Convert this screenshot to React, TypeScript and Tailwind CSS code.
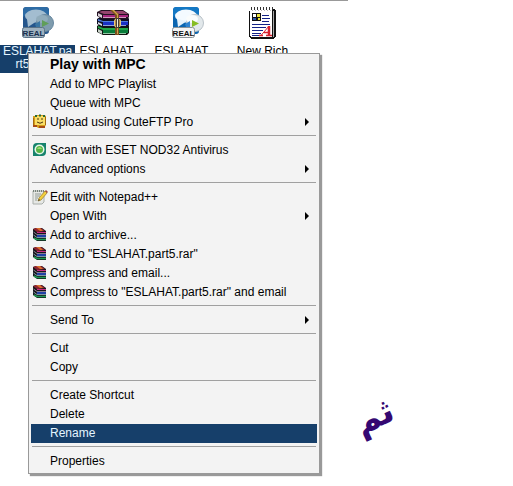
import React from 'react';

type IconName = 'cute' | 'eset' | 'notepad' | 'rar';

interface MenuEntry {
  label: string;
  icon?: IconName;
  submenu?: boolean;
  bold?: boolean;
  selected?: boolean;
}

const menuGroups: MenuEntry[][] = [
  [
    { label: 'Play with MPC', bold: true },
    { label: 'Add to MPC Playlist' },
    { label: 'Queue with MPC' },
    { label: 'Upload using CuteFTP Pro', icon: 'cute', submenu: true },
  ],
  [
    { label: 'Scan with ESET NOD32 Antivirus', icon: 'eset' },
    { label: 'Advanced options', submenu: true },
  ],
  [
    { label: 'Edit with Notepad++', icon: 'notepad' },
    { label: 'Open With', submenu: true },
    { label: 'Add to archive...', icon: 'rar' },
    { label: 'Add to "ESLAHAT.part5.rar"', icon: 'rar' },
    { label: 'Compress and email...', icon: 'rar' },
    { label: 'Compress to "ESLAHAT.part5.rar" and email', icon: 'rar' },
  ],
  [{ label: 'Send To', submenu: true }],
  [{ label: 'Cut' }, { label: 'Copy' }],
  [{ label: 'Create Shortcut' }, { label: 'Delete' }, { label: 'Rename', selected: true }],
  [{ label: 'Properties' }],
];

const RealIcon = ({ dimmed = false }: { dimmed?: boolean }) => (
  <svg width="32" height="32" viewBox="0 0 32 32" aria-hidden="true">
    <rect x="1" y="0" width="26" height="27" rx="3" fill={dimmed ? '#25568c' : '#0b65b0'} />
    <path d="M1 4Q1 0 5 0H23Q27 0 27 4V8Q14 0 1 10Z" fill={dimmed ? '#2e6ca5' : '#1478c4'} />
    <ellipse cx="14" cy="9" rx="11" ry="6.500" fill={dimmed ? '#a3bdd0' : '#f4faff'} />
    <path d="M5 12L6 20L15 14Z" fill={dimmed ? '#a3bdd0' : '#e5f2fc'} />
    <circle cx="23" cy="16" r="8.500" fill={dimmed ? '#7f9cae' : '#e2e8eb'} stroke={dimmed ? '#6888a0' : '#b9c2c8'} />
    <ellipse cx="20" cy="12" rx="6" ry="4" fill={dimmed ? '#91acbb' : '#fafcfc'} />
    <path d="M20 13L27 16.500L20 20Z" fill={dimmed ? '#609e59' : '#87bd22'} />
    <path d="M13 17L18 14V20H14Z" fill={dimmed ? '#3975a3' : '#2f83d0'} />
    <rect x="0.500" y="20.500" width="22" height="10" rx="2" fill={dimmed ? '#9eb1bf' : '#f4f4f4'} stroke={dimmed ? '#5b7387' : '#8c9499'} />
    <text x="11.500" y="28.500" textAnchor="middle" fontSize="8" fontWeight="bold" fontFamily="Liberation Sans, sans-serif" fill={dimmed ? '#172e4e' : '#111'}>
      REAL
    </text>
  </svg>
);

const ArchiveIcon = () => (
  <svg width="32" height="32" viewBox="0 0 32 32" aria-hidden="true">
    {/* bottom book */}
    <path d="M0 19L3 17H31L32 19V26L30 28H6L0 25Z" fill="#101510" />
    <path d="M1 19L6 21H31V23H6L1 21Z" fill="#1fa548" />
    <path d="M6 23H31V26H6Z" fill="#087c3a" />
    <path d="M1 22L5 24V27L1 25Z" fill="#c9d2ca" />
    <path d="M6 26.500H29" stroke="#8fc4a0" />
    {/* middle book */}
    <path d="M0 12L3 10H31L32 12V18L30 20H6L0 17Z" fill="#0e0f22" />
    <path d="M1 12L6 14H31V15H6L1 14Z" fill="#4d7be0" />
    <path d="M6 15H31V18H6Z" fill="#1930c4" />
    <path d="M1 15L5 17V19L1 17Z" fill="#d5dce9" />
    <path d="M6 18.500H29" stroke="#8fa2d8" />
    {/* top book */}
    <path d="M0 5L4 3H26L32 7V10L30 12H6L0 9Z" fill="#241222" />
    <path d="M2 5L5 4H26L31 7H7Z" fill="#95456f" />
    <path d="M6 8H31V10H6Z" fill="#a5267e" />
    <path d="M1 6L5 8V11L1 9Z" fill="#d9d0d8" />
    <path d="M6 10.500H29" stroke="#cf9cc0" />
    {/* belt */}
    <path d="M13 3H17L22 7V28H18V8Z" fill="#7b501e" />
    <path d="M15 3H17L21 7V27H20V8Z" fill="#d0a24a" />
    <rect x="17.500" y="12.500" width="6" height="7" rx="1" fill="#b28a44" stroke="#e9cd7c" />
    <path d="M20.500 11V21" stroke="#453d39" strokeWidth="3" />
    <path d="M20.500 12V20" stroke="#f3f0d8" />
  </svg>
);

const RichTextIcon = () => (
  <svg width="32" height="32" viewBox="0 0 32 32" shapeRendering="crispEdges" aria-hidden="true">
    <path d="M4 2H27L29 4V29L27 32H5L2 30V4Z" fill="#111" />
    <path d="M4 2H25V30H4L3 29V4Z" fill="#fff" />
    <path d="M26 4H27V30H26Z" fill="#aaa" />
    <path d="M4 1.500H27" stroke="#333" strokeWidth="3" strokeDasharray="1 2" />
    <path d="M5 3.500H26" stroke="#bbb" strokeDasharray="1 2" />
    <rect x="5" y="6" width="9" height="8" fill="#111" />
    <path d="M6 7H9V10H6Z" fill="#fff" />
    <path d="M10 7H13V10H10Z" fill="#eee43a" />
    <path d="M6 11H9V13H6Z" fill="#2b55aa" />
    <path d="M11 11H13V13H11Z" fill="#eee43a" />
    <path d="M15 8.500H22M15 11.500H23M15 14.500H22M5 17.500H23M5 20.500H19M5 23.500H16M5 26.500H14M5 28.500H12" stroke="#142388" />
    <g fill="none" stroke="#d8222e" shapeRendering="auto">
      <path d="M14 28.500L22 19" />
      <path d="M22 19V28" strokeWidth="2.500" />
      <path d="M17 25.500H22M12 28.500H16M19 28.500H25" strokeWidth="1.500" />
    </g>
  </svg>
);

const MenuIcon = ({ name }: { name: IconName }) => {
  if (name === 'cute') {
    return (
      <svg width="16" height="16" viewBox="0 0 16 16" aria-hidden="true">
        <path d="M1 2H4L5 1H12L14 2V11L12 14H6L4 12H1Z" fill="#d59b16" />
        <path d="M3 2H13V11H3Z" fill="#f9dd65" />
        <path d="M3 2H5M7 1.500H9M11 2H13" stroke="#286a35" strokeWidth="2" />
        <path d="M6 4V6M10 4V6M5 8Q8 10.500 11 8" fill="none" stroke="#493413" />
        <path d="M1 12H5M7 13H13" stroke="#a74b16" strokeWidth="2" />
        <path d="M1.500 4V11M13.500 3V11" stroke="#a46a0d" />
      </svg>
    );
  }
  if (name === 'eset') {
    return (
      <svg width="16" height="16" viewBox="0 0 16 16" aria-hidden="true">
        <path d="M5 1H14V10Q14 14 10 14H1V5Q1 1 5 1Z" fill="#16836d" />
        <circle cx="7.500" cy="7.500" r="5" fill="#e8f6e8" />
        <circle cx="7.500" cy="7.500" r="3.500" fill="#55b545" />
        <path d="M5 7Q7.500 3 10 7Z" fill="#9ddd71" />
      </svg>
    );
  }
  if (name === 'notepad') {
    return (
      <svg width="16" height="16" viewBox="0 0 16 16" aria-hidden="true">
        <path d="M1 2H12V13L10 15H1Z" fill="#e6e8e5" stroke="#abb0ac" />
        <path d="M1 2H12" stroke="#77827a" strokeWidth="2" strokeDasharray="1 1" />
        <path d="M3 5H9M3 7H8M3 9H6M3 11H5" stroke="#929b96" />
        <path d="M6 12L7 9L13 2L15 4L9 11Z" fill="#f3cf3c" stroke="#96772b" strokeWidth="0.700" />
        <path d="M13 2L15 4L16 3L14 1Z" fill="#a44c3c" />
        <path d="M6 12L7 10L8 11Z" fill="#333" />
      </svg>
    );
  }
  return (
    <svg width="16" height="16" viewBox="0 0 16 16" aria-hidden="true">
      <path d="M1 2L4 1H10L14 4V14H5L1 11Z" fill="#17171d" />
      <path d="M1 2L4 1H9L13 4L5 5Z" fill="#8e2330" />
      <path d="M4 1H8L11 4H8Z" fill="#d9702c" />
      <path d="M5 5.500H14" stroke="#c72c83" />
      <path d="M1.500 5L5 7.500H14" fill="none" stroke="#b9a9c0" strokeWidth="0.700" />
      <path d="M5 9H14" stroke="#244fd4" strokeWidth="1.500" />
      <path d="M1.500 8L5 10.500H14" fill="none" stroke="#a9cfdd" strokeWidth="0.700" />
      <path d="M2 11L5 12.500H14" fill="none" stroke="#1b9a51" strokeWidth="1.500" />
    </svg>
  );
};

const MenuRow = ({ entry }: { entry: MenuEntry }) => (
  <button
    type="button"
    role="menuitem"
    className={`flex h-[19px] w-full items-center gap-0.5 pr-2 pb-0.5 pl-px text-left whitespace-nowrap ${
      entry.selected ? 'bg-[#163f6a] text-[#e4f5ff]' : 'text-black'
    }`}
  >
    <span className="w-4 shrink-0">{entry.icon && <MenuIcon name={entry.icon} />}</span>
    <span className={`flex-1 pr-4 ${entry.bold ? 'text-[14px] font-bold' : 'text-[12px]'}`}>{entry.label}</span>
    {entry.submenu && (
      <svg width="4" height="8" viewBox="0 0 4 8" aria-hidden="true">
        <path d="M0 0L4 4L0 8Z" fill="#000" />
      </svg>
    )}
  </button>
);

const ContextMenu = () => (
  <div
    role="menu"
    className="absolute top-[53px] left-7 w-max min-w-[292px] border border-[#999] bg-[#f3f3f3] p-0.5 shadow-[2px_2px_1px_#999]"
  >
    {menuGroups.map((group, i) => (
      <React.Fragment key={i}>
        {i > 0 && (
          <div role="separator" className="px-px pt-[3px] pb-[5px]">
            <div className="h-px bg-[#a0a0a0]" />
          </div>
        )}
        {group.map((entry) => (
          <MenuRow key={entry.label} entry={entry} />
        ))}
      </React.Fragment>
    ))}
  </div>
);

export default function App() {
  return (
    <main className="flex min-h-screen bg-white font-['Liberation_Sans',Arial,sans-serif] text-black">
      <section className="relative w-[348px] shrink-0">
        <div className="grid grid-cols-[repeat(4,75px)] border-t border-[#999] pt-1.5 text-center text-[12px] leading-[13px]">
          <div className="flex flex-col items-center">
            <RealIcon dimmed />
            <div className="mt-1.5 w-full bg-[#163f6a] pb-0.5 text-[#e4f5ff]">
              ESLAHAT.pa
              <div className="pr-3">rt5.rar</div>
            </div>
          </div>
          <div className="flex flex-col items-center">
            <ArchiveIcon />
            <div className="mt-1.5 w-full pr-3">ESLAHAT</div>
          </div>
          <div className="flex flex-col items-center">
            <RealIcon />
            <div className="mt-1.5 w-full pr-3">ESLAHAT</div>
          </div>
          <div className="flex flex-col items-center">
            <RichTextIcon />
            <div className="mt-1.5 w-full">New Rich</div>
          </div>
        </div>
        <ContextMenu />
      </section>
      <aside className="pt-[392px] pl-1.5">
        <p
          lang="ar"
          dir="rtl"
          className="-rotate-[25deg] font-['DejaVu_Sans',sans-serif] text-[34px] leading-[48px] font-bold text-[#350872]"
        >
          ثم
        </p>
      </aside>
    </main>
  );
}
